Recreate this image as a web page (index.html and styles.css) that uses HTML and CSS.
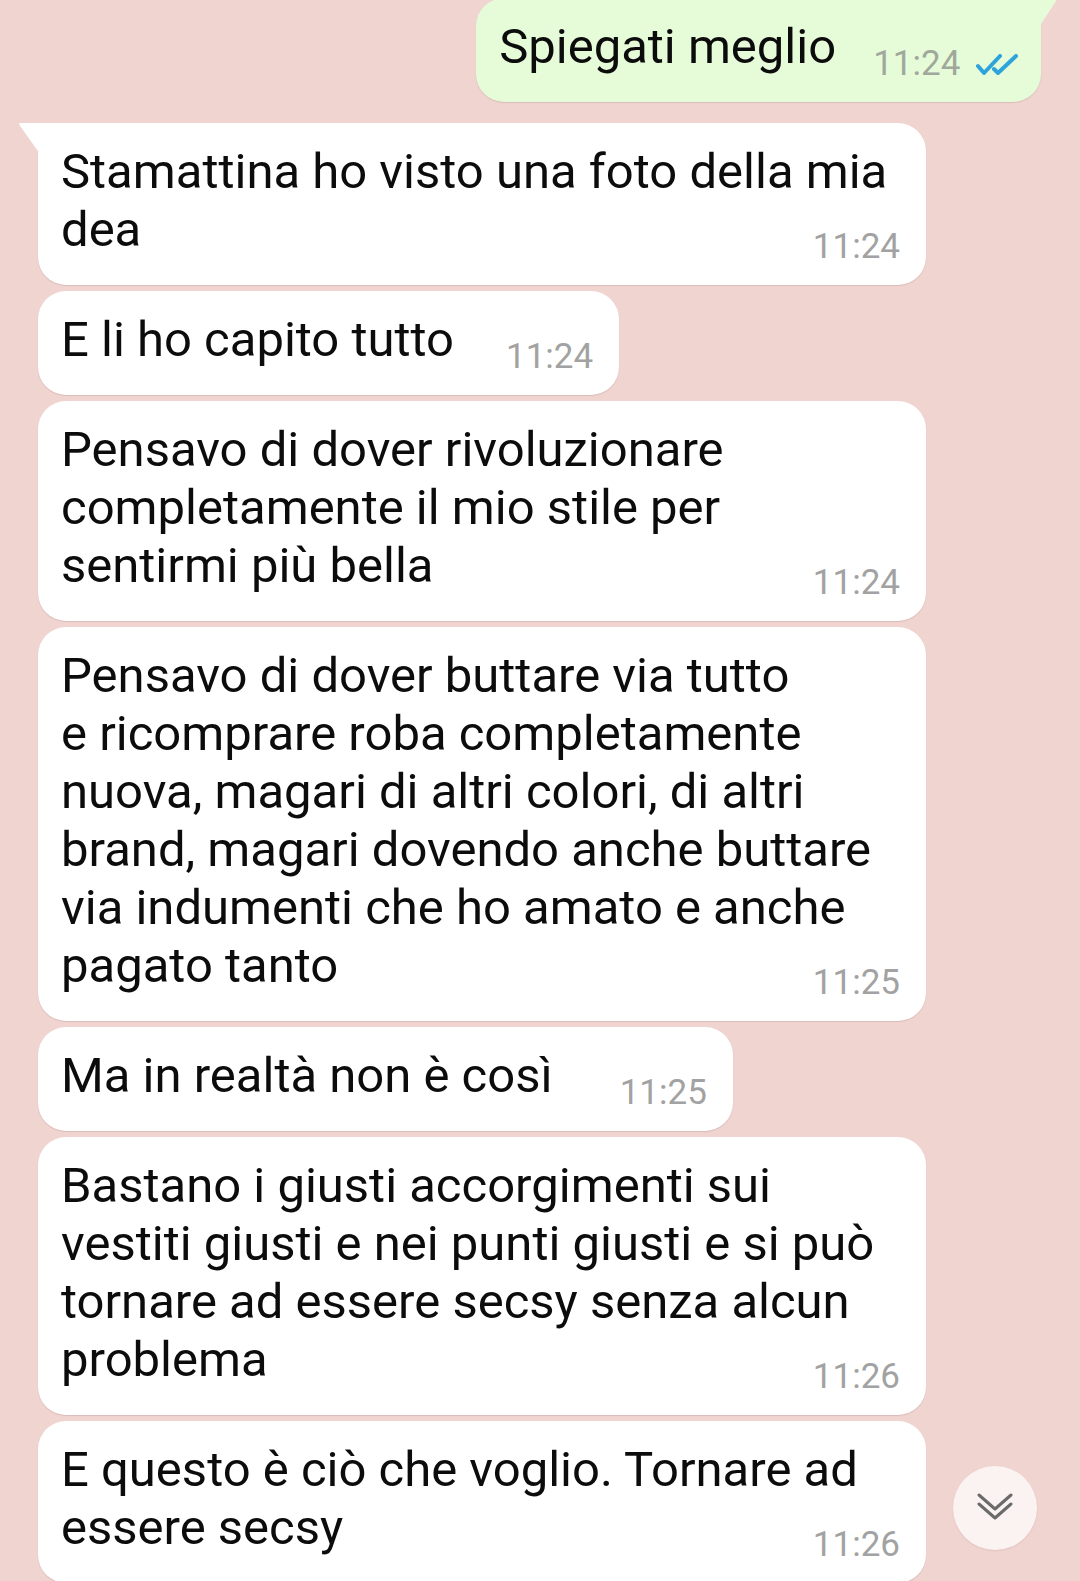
FILE: index.html
```html
<!DOCTYPE html>
<html lang="it">
<head>
    <meta charset="UTF-8">
    <meta name="viewport" content="width=device-width, initial-scale=1.0">
    <title>Chat</title>
    <link rel="stylesheet" href="styles.css">
</head>
<body>
    <!-- Conversation -->
    <div class="chat">
        <div class="bubble out first">
            <p class="text">Spiegati meglio<span class="meta">11:24
                <svg class="ticks" viewBox="0 0 42 22" width="42" height="22">
                    <path d="M2 12 L8 19 L24 2" />
                    <path d="M18 15 L22 19 L40 2" />
                </svg></span></p>
        </div>

        <div class="bubble in first">
            <p class="text">Stamattina ho visto una foto della mia dea<span class="meta">11:24</span></p>
        </div>
        <div class="bubble in">
            <p class="text">E li ho capito tutto<span class="meta">11:24</span></p>
        </div>
        <div class="bubble in">
            <p class="text">Pensavo di dover rivoluzionare completamente il mio stile per sentirmi più bella<span class="meta">11:24</span></p>
        </div>
        <div class="bubble in">
            <p class="text">Pensavo di dover buttare via tutto<br>e ricomprare roba completamente nuova, magari di altri colori, di altri brand, magari dovendo anche buttare via indumenti che ho amato e anche pagato tanto<span class="meta">11:25</span></p>
        </div>
        <div class="bubble in">
            <p class="text">Ma in realtà non è così<span class="meta wide">11:25</span></p>
        </div>
        <div class="bubble in">
            <p class="text">Bastano i giusti accorgimenti sui vestiti giusti e nei punti giusti e si può tornare ad essere secsy senza alcun problema<span class="meta">11:26</span></p>
        </div>
        <div class="bubble in">
            <p class="text">E questo è ciò che voglio. Tornare ad essere secsy<span class="meta">11:26</span></p>
        </div>
    </div>

    <!-- Scroll to bottom -->
    <button class="scroll-down" type="button" aria-label="Scorri in basso">
        <svg viewBox="0 0 36 30" width="36" height="30">
            <path d="M2 2 L18 16 L34 2" />
            <path d="M2 11 L18 25 L34 11" />
        </svg>
    </button>
</body>
</html>
```

FILE: styles.css
```css
:root {
    --color-bg: #f0d4d0; /* Pink wallpaper */
    --color-in: #ffffff;
    --color-out: #e6fcd8;
    --color-text: #0c0c0c;
    --color-time: #a2a2a2;
    --color-tick: #2ea3dc;
    --font-family: 'Roboto', 'Noto Sans', sans-serif;
}

* {
    box-sizing: border-box;
    margin: 0;
    padding: 0;
    font-family: var(--font-family);
}

body {
    width: 1080px;
    height: 1581px;
    overflow: hidden;
    background: var(--color-bg);
    color: var(--color-text);
    position: relative;
}

/* Conversation column */
.chat {
    display: flex;
    flex-direction: column;
    align-items: flex-start;
    gap: 6px;
    padding: 0 0 0 38px;
}

.bubble {
    position: relative;
    max-width: 888px;
    padding: 20px 26px 26px 23px;
    border-radius: 28px;
    box-shadow: 0 1px 1px rgba(120, 80, 80, 0.18);
}

.bubble.in {
    background: var(--color-in);
}

.bubble.out {
    background: var(--color-out);
    align-self: flex-end;
    margin: -2px 39px 15px 0;
    padding-right: 23px;
}

/* Tails */
.bubble.in.first {
    border-top-left-radius: 0;
}

.bubble.in.first::before {
    content: "";
    position: absolute;
    left: -20px;
    top: 0;
    width: 22px;
    height: 31px;
    background: var(--color-in);
    clip-path: polygon(0 0, 100% 0, 100% 100%);
    border-top-left-radius: 3px;
}

.bubble.out.first {
    border-top-right-radius: 0;
}

.bubble.out.first::after {
    content: "";
    position: absolute;
    right: -17px;
    top: 0;
    width: 19px;
    height: 29px;
    background: var(--color-out);
    clip-path: polygon(0 0, 100% 0, 0 100%);
}

/* Text */
.text {
    display: flow-root;
    font-size: 49px;
    line-height: 58px;
}

.meta {
    float: right;
    position: relative;
    top: 17px;
    margin-left: 52px;
    font-size: 35px;
    color: var(--color-time);
    white-space: nowrap;
}

.meta.wide {
    margin-left: 67px;
}

.bubble.out .meta {
    margin-left: 37px;
    color: #a0a89b;
}

.ticks {
    margin-left: 7px;
    vertical-align: -1px;
    fill: none;
    stroke: var(--color-tick);
    stroke-width: 4;
    stroke-linecap: round;
    stroke-linejoin: round;
}

/* Scroll button */
.scroll-down {
    position: absolute;
    left: 953px;
    top: 1466px;
    width: 84px;
    height: 84px;
    border: none;
    border-radius: 50%;
    background: #fbf3f2;
    display: flex;
    align-items: center;
    justify-content: center;
    box-shadow: 0 1px 2px rgba(120, 80, 80, 0.12);
}

.scroll-down svg {
    fill: none;
    stroke: #6a6a6a;
    stroke-width: 3;
    stroke-linecap: round;
    stroke-linejoin: round;
}
```
